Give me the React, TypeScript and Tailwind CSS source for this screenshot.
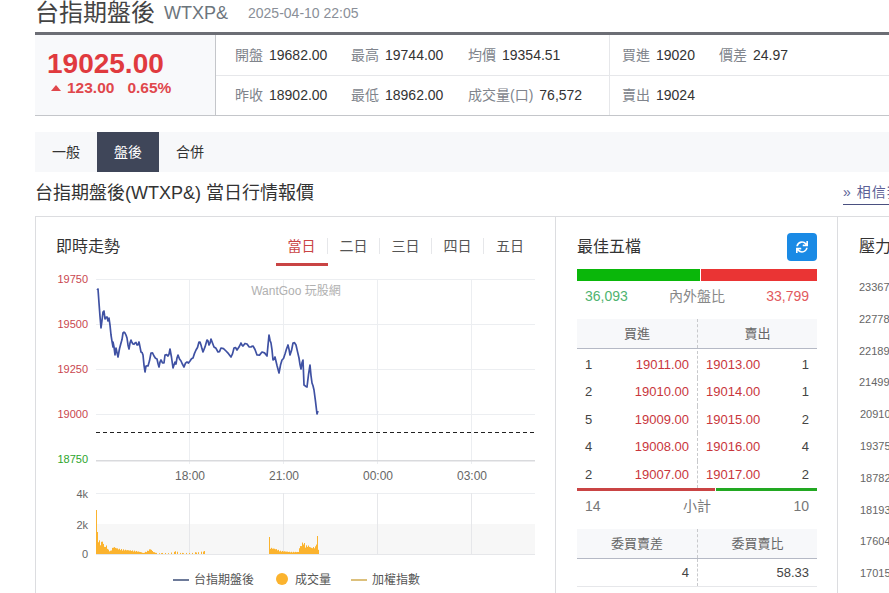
import React from 'react';
import { FaSync } from 'react-icons/fa';

const FONT = { fontFamily: '"Liberation Sans", "Noto Sans CJK TC", sans-serif' };

// traced from the intraday line: [x, y]
const LINE: number[][] = [
  [97,290],[98,289],[99,303],[101,328],[103,312],[104,311],[105,319],[107,317],[108,321],[109,318],[111,335],[113,347],[113,342],[115,355],[116,348],[118,357],[121,343],[123,333],[125,333],[127,338],[129,349],[131,340],[133,344],[135,343],[137,345],[139,342],[141,352],[143,355],[145,372],[146,366],[148,366],[151,353],[154,356],[157,359],[159,367],[161,360],[164,363],[165,355],[168,356],[170,349],[173,368],[175,362],[176,364],[178,355],[181,361],[184,367],[187,362],[190,361],[193,358],[196,350],[199,342],[201,345],[203,352],[207,340],[209,345],[211,339],[214,347],[218,352],[221,348],[226,351],[231,357],[234,348],[237,350],[241,343],[243,346],[247,344],[251,347],[253,346],[257,355],[262,352],[267,356],[269,335],[271,343],[273,360],[275,357],[279,373],[282,360],[285,354],[288,345],[290,355],[293,343],[296,345],[299,358],[301,369],[303,360],[304,385],[307,387],[310,365],[312,383],[314,390],[317,414],[318,411],
];

// small wiggle between the traced points, the real series is tick data
const linePath = LINE.map(([x, y], i) => {
  if (i === 0) return `M${x} ${y}`;
  const [px, py] = LINE[i - 1];
  if (x - px < 2) return `L${x} ${y}`;
  const mid = (py + y) / 2 + 1.6 * Math.sin(i * 2.3);
  return `L${(px + x) / 2} ${mid} L${x} ${y}`;
}).join(' ');

// height envelope for the volume bars: [x, h]
const ENV: number[][] = [
  [96,44],[97,20],[98,15],[100,10],[102,13],[104,7],[106,8],[108,4],[110,3],[113,7],[118,5],[125,4],[135,3],[140,2],[143,1],[147,3],[150,5],[153,2],[156,1],[170,1],[173,2],[176,3],[179,1],[190,1],[206,3],[207,0],[268,0],[269,17],[270,6],[275,5],[280,3],[290,2],[298,2],[299,6],[303,12],[305,8],[308,8],[311,6],[315,7],[317,18],[318,5],
];

const heightAt = (x: number) => {
  for (let i = 0; i < ENV.length - 1; i++) {
    const [a, ha] = ENV[i];
    const [b, hb] = ENV[i + 1];
    if (x >= a && x <= b) return ha + ((hb - ha) * (x - a)) / (b - a || 1);
  }
  return 0;
};

const BARS = Array.from({ length: 223 }, (_, i) => {
  const x = 96 + i;
  let h = heightAt(x);
  if (x > 96 && x !== 269 && x !== 317) h = h * (0.75 + 0.35 * Math.abs(Math.sin(x * 1.7)));
  if (x > 156 && x < 268 && x % 3 !== 0 && x % 7 !== 0) h = 0;
  if (x > 208 && x < 268 && x % 9 !== 0) h = 0;
  return { x, h };
}).filter(b => b.h > 0);

const STATS = [
  [['開盤', '19682.00'], ['最高', '19744.00'], ['均價', '19354.51']],
  [['昨收', '18902.00'], ['最低', '18962.00'], ['成交量(口)', '76,572']],
];

const ORDERS = [
  [1, '19011.00', '19013.00', 1],
  [2, '19010.00', '19014.00', 1],
  [5, '19009.00', '19015.00', 2],
  [4, '19008.00', '19016.00', 4],
  [2, '19007.00', '19017.00', 2],
];

const PRESSURE = ['23367', '22778', '22189', '21499', '20910', '19375', '18782', '18193', '17604', '17015'];

const Stat = ({ label, value, w }: { label: string; value: string; w: string }) => (
  <div className={`flex items-center gap-[6px] text-sm ${w}`}>
    <span className="text-[#80848c]">{label}</span>
    <span className="text-[#333]">{value}</span>
  </div>
);

const QuoteBar = () => (
  <div className="flex h-[84px] border-t-[3px] border-b border-t-[#6c6e75] border-b-[#c4c6ca]">
    <div className="w-[181px] shrink-0 border-r border-[#c4c6ca] bg-[#f8f9fb] pl-3 pt-[14px]">
      <div className="text-[28px] font-bold leading-[30px] text-[#e03a3e]">19025.00</div>
      <div className="flex items-center text-[15.5px] font-bold leading-[18px] text-[#e0474c]">
        <span className="ml-1 mr-[6px] h-0 w-0 border-x-[5px] border-b-[6px] border-x-transparent border-b-[#e0474c]" />
        <span>123.00</span>
        <span className="ml-[13px]">0.65%</span>
      </div>
    </div>
    <div className="flex-1">
      <div className="flex h-[41px] border-b border-[#e6e7ea]">
        <div className="flex w-[394px] items-center border-r border-[#e6e7ea] pl-[19px]">
          {STATS[0].map(([l, v], i) => (
            <Stat key={l} label={l} value={v} w={i === 0 ? 'w-[116px]' : 'w-[117px]'} />
          ))}
        </div>
        <div className="flex items-center pl-[12px]">
          <Stat label="買進" value="19020" w="w-[97px]" />
          <Stat label="價差" value="24.97" w="w-[100px]" />
        </div>
      </div>
      <div className="flex h-[39px]">
        <div className="flex w-[394px] items-center border-r border-[#e6e7ea] pb-[2px] pl-[19px]">
          {STATS[1].map(([l, v], i) => (
            <Stat key={l} label={l} value={v} w={i === 0 ? 'w-[116px]' : 'w-[117px]'} />
          ))}
        </div>
        <div className="flex items-center pb-[2px] pl-[12px]">
          <Stat label="賣出" value="19024" w="w-[97px]" />
        </div>
      </div>
    </div>
  </div>
);

const Chart = () => (
  <svg viewBox="36 268 520 325" className="block h-[325px] w-[520px]">
    {/* price grid */}
    {[279, 324, 369, 414].map(y => (
      <line key={y} x1="96" x2="535" y1={y + 0.5} y2={y + 0.5} stroke="#eceef1" />
    ))}
    {[190, 284, 378, 472].map(x => (
      <line key={x} x1={x - 0.5} x2={x - 0.5} y1="279" y2="464" stroke="#eceef1" />
    ))}
    <rect x="96" y="460" width="439" height="1.5" fill="#d9dadd" />
    <line x1="96" x2="535" y1="432.5" y2="432.5" stroke="#222" strokeDasharray="4 3" />
    <text x="296" y="295" textAnchor="middle" fontSize="12" fill="#b0b0b0">WantGoo 玩股網</text>
    {[['19750', 283, '#c9474f'], ['19500', 328, '#c9474f'], ['19250', 373, '#c9474f'], ['19000', 418, '#c9474f'], ['18750', 463, '#2da52d']].map(([t, y, c]) => (
      <text key={t as string} x="88" y={y as number} textAnchor="end" fontSize="11" fill={c as string}>{t}</text>
    ))}
    {['18:00', '21:00', '00:00', '03:00'].map((t, i) => (
      <text key={t} x={190 + i * 94} y="480" textAnchor="middle" fontSize="12" fill="#666">{t}</text>
    ))}
    <path d={linePath} fill="none" stroke="#3f51a3" strokeWidth="1.7" strokeLinejoin="round" />

    {/* volume */}
    <rect x="96" y="524" width="439" height="30" fill="#f7f7f7" />
    <line x1="96" x2="535" y1="493.5" y2="493.5" stroke="#eceef1" />
    <line x1="96" x2="535" y1="554.5" y2="554.5" stroke="#e6e7ea" />
    {[190, 284, 378, 472].map(x => (
      <line key={x} x1={x - 0.5} x2={x - 0.5} y1="493" y2="554" stroke="#e6e7ea" />
    ))}
    {[['4k', 498], ['2k', 529], ['0', 558]].map(([t, y]) => (
      <text key={t} x="88" y={y as number} textAnchor="end" fontSize="11" fill="#666">{t}</text>
    ))}
    {BARS.map(b => (
      <rect key={b.x} x={b.x} y={554 - b.h} width="1" height={b.h} fill="#fbb32e" />
    ))}

    {/* legend */}
    <rect x="173" y="579" width="16" height="2" fill="#6d7a99" />
    <text x="194" y="584" fontSize="12" fill="#555">台指期盤後</text>
    <circle cx="282" cy="579" r="6" fill="#fbb32e" />
    <text x="295" y="584" fontSize="12" fill="#555">成交量</text>
    <rect x="351" y="579" width="16" height="2" fill="#dcc07c" />
    <text x="372" y="584" fontSize="12" fill="#555">加權指數</text>
  </svg>
);

const TrendPanel = () => (
  <div className="w-[521px] shrink-0 border-x border-[#dcdde0]">
    <div className="flex h-[51px] items-start pl-5 pr-[19px]">
      <div className="flex-1 pt-[18px] text-base leading-[24px] text-[#333]">即時走勢</div>
      <div className="flex pt-[17px] text-sm">
        {['當日', '二日', '三日', '四日', '五日'].map((t, i) => (
          <div key={t} className={`flex h-[32px] w-[52px] items-start ${i === 0 ? 'border-b-[3px] border-[#c94444] text-[#c94444]' : 'text-[#555]'}`}>
            <span className="flex-1 text-center leading-[24px]">{t}</span>
            {i < 4 && <span className="mt-1 h-4 w-px bg-[#e6e7ea]" />}
          </div>
        ))}
      </div>
    </div>
    <Chart />
  </div>
);

const HeadCell = ({ children, left }: { children: React.ReactNode; left?: boolean }) => (
  <div className={`w-1/2 text-center leading-[30px] ${left ? 'border-l border-dashed border-[#c8c9cc]' : ''}`}>{children}</div>
);

const BestFive = () => (
  <div className="w-[282px] shrink-0 border-r border-[#dcdde0] pl-[21px] pr-5 pt-4">
    <div className="flex h-[28px] items-center justify-between">
      <div className="text-base text-[#333]">最佳五檔</div>
      <button className="flex h-[28px] w-[30px] items-center justify-center rounded-sm bg-[#1a8ae5] text-white">
        <FaSync size={12} />
      </button>
    </div>
    <div className="mt-2 flex h-3 gap-px">
      <div className="w-[123px] bg-[#0ab70a]" />
      <div className="flex-1 bg-[#ea3434]" />
    </div>
    <div className="mt-[6px] flex justify-between px-2 text-sm leading-[18px]">
      <span className="text-[#4fb36f]">36,093</span>
      <span className="text-[#888]">內外盤比</span>
      <span className="text-[#e25a5e]">33,799</span>
    </div>
    <div className="mt-[14px] flex h-[30px] border-b border-[#b5b9c5] bg-[#f7f8fa] text-[13px] text-[#666]">
      <HeadCell>買進</HeadCell>
      <HeadCell left>賣出</HeadCell>
    </div>
    <div className="pt-[2px]">
      {ORDERS.map(([bq, bp, sp, sq], i) => (
        <div key={i} className="flex h-[27.4px] text-[13px] text-[#444]">
          <div className="flex w-1/2 items-center justify-between pl-2 pr-2">
            <span>{bq}</span>
            <span className="text-[#c9363c]">{bp}</span>
          </div>
          <div className="flex w-1/2 items-center justify-between border-l border-dashed border-[#c8c9cc] pl-2 pr-2">
            <span className="text-[#c9363c]">{sp}</span>
            <span>{sq}</span>
          </div>
        </div>
      ))}
    </div>
    <div className="flex h-[3px]">
      <div className="w-[138px] bg-[#c94444]" />
      <div className="ml-px flex-1 bg-[#22a822]" />
    </div>
    <div className="flex h-[30px] items-center justify-between px-2 text-sm text-[#777]">
      <span>14</span>
      <span>小計</span>
      <span>10</span>
    </div>
    <div className="mt-[8px] flex h-[30px] border-b border-[#b5b9c5] bg-[#f7f8fa] text-[13px] text-[#666]">
      <HeadCell>委買賣差</HeadCell>
      <HeadCell left>委買賣比</HeadCell>
    </div>
    <div className="flex h-[28px] border-b border-[#e6e7ea] text-[13px] text-[#444]">
      <div className="flex w-1/2 items-center justify-end pr-2">4</div>
      <div className="flex w-1/2 items-center justify-end border-l border-dashed border-[#c8c9cc] pr-2">58.33</div>
    </div>
  </div>
);

const PressurePanel = () => (
  <div className="flex-1 pl-[21px] pt-4">
    <div className="text-base leading-[28px] text-[#333]">壓力支撐</div>
    <div className="mt-[19px] text-[11px] text-[#666]">
      {PRESSURE.map((p, i) => (
        <div key={p} className={`h-[31.8px] leading-[14px] ${i > 3 ? 'pl-px' : ''}`}>{p}</div>
      ))}
    </div>
  </div>
);

export default function App() {
  return (
    <div className="h-[593px] w-[889px] overflow-hidden bg-white" style={FONT}>
      <div className="ml-[35px] w-[1200px]">
        <div className="flex h-8 items-center pb-[6px] leading-[26px]">
          <span className="text-2xl leading-[26px] text-[#444]">台指期盤後</span>
          <span className="ml-[9px] text-lg leading-[26px] text-[#6c757d]">WTXP&amp;</span>
          <span className="ml-[20px] text-sm leading-[26px] text-[#8a8f98]">2025-04-10 22:05</span>
        </div>
        <QuoteBar />
        <div className="mt-4 flex h-10 bg-[#f7f8fa] text-sm leading-10 text-[#333]">
          <div className="w-[62px] text-center">一般</div>
          <div className="w-[62px] bg-[#3f4659] text-center text-white">盤後</div>
          <div className="w-[62px] text-center">合併</div>
        </div>
        <div className="flex h-[44px] items-start pt-[10px]">
          <div className="w-[808px] text-lg leading-[22px] text-[#333]">台指期盤後(WTXP&amp;) 當日行情報價</div>
          <div className="mt-[1px] w-[300px] border-b border-[#4a5080] pb-[2px] text-sm leading-[19px] tracking-[1px] text-[#5b5f97]">» 相信我們</div>
        </div>
        <div className="flex h-[400px] border-t border-[#dcdde0]">
          <TrendPanel />
          <BestFive />
          <PressurePanel />
        </div>
      </div>
    </div>
  );
}
